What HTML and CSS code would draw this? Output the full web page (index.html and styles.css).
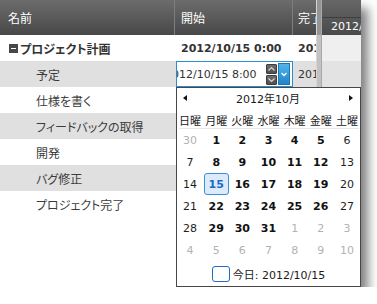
FILE: index.html
```html
<!DOCTYPE html>
<html lang="ja">
<head>
<meta charset="utf-8">
<title>Gantt</title>
<link rel="stylesheet" href="styles.css">
</head>
<body>
<div class="window">
  <div class="grid">
    <div class="ghead">
      <div class="hc c1">名前</div>
      <div class="hc c2">開始</div>
      <div class="hc c3">完了</div>
    </div>
    <div class="row bold">
      <div class="c c1 name"><span class="toggle"></span>プロジェクト計画</div>
      <div class="c c2">2012/10/15 0:00</div>
      <div class="c c3">2012/10/19 17:00</div>
    </div>
    <div class="row alt">
      <div class="c c1 name child">予定</div>
      <div class="c c2 edit-cell">
        <div class="editor">
          <div class="etext"><span>2012/10/15 8:00</span></div>
          <div class="spin">
            <span class="sb"><svg width="9" height="8" viewBox="0 0 9 8"><path d="M1.5 5.5 L4.5 2.5 L7.5 5.5" fill="none" stroke="#d8d8d8" stroke-width="1.2"/></svg></span>
            <span class="sb"><svg width="9" height="8" viewBox="0 0 9 8"><path d="M1.5 2.5 L4.5 5.5 L7.5 2.5" fill="none" stroke="#d8d8d8" stroke-width="1.2"/></svg></span>
          </div>
          <div class="dd"><svg width="10" height="8" viewBox="0 0 10 8"><path d="M2.5 3 L5 5.5 L7.5 3" fill="none" stroke="#fff" stroke-width="1.3"/></svg></div>
        </div>
      </div>
      <div class="c c3">2012/10/15 17:00</div>
    </div>
    <div class="row">
      <div class="c c1 name child">仕様を書く</div>
      <div class="c c2"></div>
      <div class="c c3"></div>
    </div>
    <div class="row alt">
      <div class="c c1 name child">フィードバックの取得</div>
      <div class="c c2"></div>
      <div class="c c3"></div>
    </div>
    <div class="row">
      <div class="c c1 name child">開発</div>
      <div class="c c2"></div>
      <div class="c c3"></div>
    </div>
    <div class="row alt">
      <div class="c c1 name child">バグ修正</div>
      <div class="c c2"></div>
      <div class="c c3"></div>
    </div>
    <div class="row">
      <div class="c c1 name child">プロジェクト完了</div>
      <div class="c c2"></div>
      <div class="c c3"></div>
    </div>
  </div>
  <div class="splitter"><div class="sp-head"></div></div>
  <div class="chart">
    <div class="chead">
      <div class="cband top"></div>
      <div class="cband">2012/10/14</div>
    </div>
    <div class="crow"></div>
    <div class="crow alt"></div>
    <div class="crow"></div>
    <div class="crow alt"></div>
    <div class="crow"></div>
    <div class="crow alt"></div>
    <div class="crow"></div>
  </div>

  <div class="cal">
    <div class="cal-head">
      <span class="arrow left"></span>
      <span class="title">2012年10月</span>
      <span class="arrow right"></span>
    </div>
    <div class="dnames">
      <span>日曜</span><span>月曜</span><span>火曜</span><span>水曜</span><span>木曜</span><span>金曜</span><span>土曜</span>
    </div>
    <div class="days">
      <span class="o">30</span><span class="b">1</span><span class="b">2</span><span class="b">3</span><span class="b">4</span><span class="b">5</span><span>6</span>
      <span>7</span><span class="b">8</span><span class="b">9</span><span class="b">10</span><span class="b">11</span><span class="b">12</span><span>13</span>
      <span>14</span><span class="b sel">15</span><span class="b">16</span><span class="b">17</span><span class="b">18</span><span class="b">19</span><span>20</span>
      <span>21</span><span class="b">22</span><span class="b">23</span><span class="b">24</span><span class="b">25</span><span class="b">26</span><span>27</span>
      <span>28</span><span class="b">29</span><span class="b">30</span><span class="b">31</span><span class="o">1</span><span class="o">2</span><span class="o">3</span>
      <span class="o">4</span><span class="o">5</span><span class="o">6</span><span class="o">7</span><span class="o">8</span><span class="o">9</span><span class="o">10</span>
    </div>
    <div class="cal-foot">
      <span class="todaybox"></span>
      <span>今日: 2012/10/15</span>
    </div>
  </div>
</div>
</body>
</html>
```

FILE: styles.css
```css
* { box-sizing: border-box; }

body {
  margin: 0;
  background: #fff;
  font-family: "DejaVu Sans", "Noto Sans CJK JP", sans-serif;
  font-size: 11px;
  color: #333;
}

.window {
  position: relative;
  width: 361px;
  height: 287px;
  display: flex;
  overflow: hidden;
  background: #fff;
  box-shadow: 7px 8px 10px rgba(0, 0, 0, 0.5);
}

/* grid */
.grid {
  width: 316px;
  flex: none;
}

.ghead {
  display: grid;
  grid-template-columns: 175px 118px 23px;
  height: 35px;
  background: linear-gradient(#6c6c6c, #484848);
  color: #fff;
}

.hc {
  display: flex;
  align-items: center;
  padding-left: 8px;
  font-family: "Noto Sans CJK JP", sans-serif;
  font-size: 12px;
  white-space: nowrap;
  overflow: hidden;
}

.hc.c1,
.hc.c2 {
  border-right: 1px solid #7e7e7e;
}

.row {
  display: grid;
  grid-template-columns: 175px 118px 23px;
  height: 26px;
}

.row.alt { background: #e0e0e0; }

.c {
  display: flex;
  align-items: center;
  white-space: nowrap;
  overflow: hidden;
}

.name {
  padding-left: 9px;
  font-family: "Noto Sans CJK JP", sans-serif;
  font-size: 12px;
  font-feature-settings: "palt";
  color: #3c3c3c;
}

.name.child { padding-left: 36px; }

.c2 { padding-left: 6px; }
.c3 { padding-left: 5px; }

.row.bold { font-weight: bold; }
.row.bold .name { color: #333; }

.toggle {
  width: 9px;
  height: 9px;
  margin-right: 2px;
  flex: none;
  background: linear-gradient(#fff, #fff) center / 5px 1px no-repeat, #474747;
}

/* editor */
.edit-cell { padding-left: 1px; }

.editor {
  width: 117px;
  height: 26px;
  border: 1px solid #2f8ccc;
  background: #fff;
  display: flex;
  align-items: center;
}

.etext {
  flex: 1;
  overflow: hidden;
  white-space: nowrap;
  color: #333;
}

.etext span { margin-left: -12px; }

.spin {
  display: flex;
  flex-direction: column;
  gap: 1px;
}

.sb {
  width: 11px;
  height: 10px;
  display: flex;
  align-items: center;
  justify-content: center;
  background: linear-gradient(#6c6c6c, #4f4f4f);
  border: 1px solid #3e3e3e;
  border-radius: 1px;
}

.dd {
  width: 12px;
  height: 22px;
  margin: 0 2px 0 1px;
  display: flex;
  align-items: center;
  justify-content: center;
  background: linear-gradient(#52b4ea, #1f86c9);
  border: 1px solid #1b77b7;
}

/* splitter */
.splitter {
  width: 6px;
  flex: none;
  background: #c2c2c2;
  border-left: 1px solid #d6d6d6;
  border-right: 1px solid #a9a9a9;
}

.sp-head {
  height: 35px;
  background: #959595;
}

/* chart */
.chart {
  flex: 1;
  background: #fff;
}

.chead {
  height: 35px;
  background: linear-gradient(#666, #4a4a4a);
  color: #fff;
}

.cband {
  height: 17px;
  padding-left: 9px;
  display: flex;
  align-items: center;
  white-space: nowrap;
  overflow: hidden;
}

.cband.top {
  height: 18px;
  border-bottom: 1px solid #3f3f3f;
}

.crow { height: 26px; background: #efefef; }
.crow.alt { background: #e3e3e3; }

/* calendar */
.cal {
  position: absolute;
  left: 176px;
  top: 87px;
  width: 185px;
  height: 200px;
  border: 1px solid #474747;
  background: #fff;
  color: #111;
  display: flex;
  flex-direction: column;
}

.cal-head {
  height: 20px;
  flex: none;
  display: flex;
  align-items: center;
  justify-content: space-between;
  padding: 0 7px 0 6px;
}

.title { color: #1a1a1a; }

.arrow {
  width: 0;
  height: 0;
  border-top: 3.5px solid transparent;
  border-bottom: 3.5px solid transparent;
}

.arrow.left { border-right: 4px solid #111; }
.arrow.right { border-left: 4px solid #111; }

.dnames {
  height: 21px;
  flex: none;
  padding-top: 2px;
  display: grid;
  grid-template-columns: repeat(7, 1fr);
  align-items: center;
  justify-items: center;
  color: #1a1a1a;
  background: linear-gradient(#e6e6e6, #e6e6e6) bottom center / 180px 1px no-repeat;
}

.days {
  display: grid;
  grid-template-columns: repeat(7, 1fr);
  grid-auto-rows: 22px;
  flex: none;
}

.days span {
  display: flex;
  align-items: center;
  justify-content: center;
  color: #1e1e1e;
}

.days .b { font-weight: bold; color: #111; }
.days .o { color: #b2b2b2; }

.days .sel {
  margin: 0 0.5px;
  border: 1px solid #3f8fd4;
  border-radius: 3px;
  background: #dcebfa;
  color: #1a6cc6;
}

.cal-foot {
  flex: 1;
  display: flex;
  align-items: center;
  justify-content: center;
  gap: 3px;
  color: #1a1a1a;
}

.todaybox {
  width: 18px;
  height: 16px;
  border: 1px solid #1c6cc4;
  border-radius: 3px;
}
```
